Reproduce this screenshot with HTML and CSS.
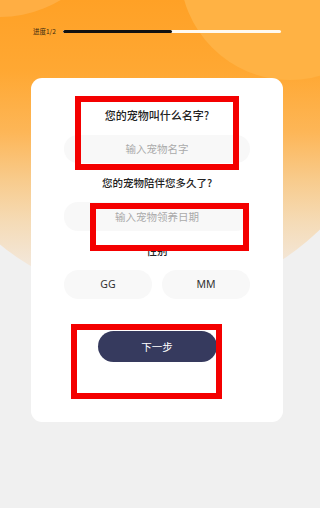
FILE: index.html
```html
<!DOCTYPE html>
<html lang="zh-CN">
<head>
<meta charset="utf-8">
<title>宠物信息</title>
<link rel="stylesheet" href="styles.css">
</head>
<body>
<div class="bg">
  <div class="bg-oval"></div>
  <div class="bg-circle-left"></div>
  <div class="bg-circle-right"></div>
</div>

<div class="page">
  <div class="progress">
    <span class="progress-label">进度1/2</span>
    <div class="progress-track"><div class="progress-fill"></div></div>
  </div>

  <div class="card">
    <div class="label label-first">您的宠物叫什么名字?</div>
    <div class="field field-first">输入宠物名字</div>
    <div class="label">您的宠物陪伴您多久了?</div>
    <div class="field field-second">输入宠物领养日期</div>
    <div class="label">性别</div>
    <div class="gender-row">
      <div class="gender">GG</div>
      <div class="gender">MM</div>
    </div>
    <div class="next">下一步</div>
  </div>
</div>

<div class="mark mark-one"></div>
<div class="mark mark-two"></div>
<div class="mark mark-three"></div>
</body>
</html>
```

FILE: styles.css
```css
html, body {
  margin: 0;
  padding: 0;
  background: #f0f0f0;
}

body {
  position: relative;
  min-width: 303px;
  height: 508px;
  overflow: hidden;
  font-family: "Noto Sans CJK SC", "Noto Sans", sans-serif;
  color: #222;
}

.bg {
  position: absolute;
  left: 0;
  top: 0;
  width: 100%;
  height: 508px;
  overflow: hidden;
}

.bg-oval {
  position: absolute;
  left: -110px;
  top: -300px;
  width: 523px;
  height: 600px;
  border-radius: 50%;
  background: linear-gradient(180deg,
    #ffa126 0%,
    #ffa126 50%,
    #ffa833 62%,
    #fdb657 72%,
    #f8cb8c 80%,
    #f5dbb6 87%,
    #f3e7d9 94%,
    #f1ede8 100%);
}

.bg-circle-left {
  position: absolute;
  left: -117px;
  top: -217px;
  width: 234px;
  height: 234px;
  border-radius: 50%;
  background: #ffae43;
}

.bg-circle-right {
  position: absolute;
  left: 180px;
  top: -140px;
  width: 220px;
  height: 220px;
  border-radius: 50%;
  background: #ffb244;
}

.page {
  position: relative;
  padding-top: 29px;
}

.progress {
  display: flex;
  align-items: center;
  margin-left: 33px;
  width: 248px;
  height: 5px;
}

.progress-label {
  font-size: 6.5px;
  line-height: 5px;
  color: #3a2a10;
  white-space: nowrap;
  width: 30px;
}

.progress-track {
  flex: 1;
  height: 3px;
  border-radius: 2px;
  background: #fffaf0;
  overflow: hidden;
}

.progress-fill {
  width: 50%;
  height: 100%;
  background: #111;
  border-radius: 2px;
}

.card {
  margin-top: 44px;
  margin-left: 31px;
  width: 252px;
  box-sizing: border-box;
  padding: 0 33px 60px;
  background: #fff;
  border-radius: 11px;
  display: flex;
  flex-direction: column;
  align-items: stretch;
}

.label {
  margin-top: 12px;
  height: 16px;
  line-height: 16px;
  text-align: center;
  font-size: 10.5px;
  font-weight: 500;
  color: #222;
}

.label-first {
  margin-top: 29px;
  font-size: 11px;
}

.field {
  height: 28px;
  line-height: 28px;
  border-radius: 14px;
  background: #f8f8f8;
  text-align: center;
  font-size: 10.5px;
  color: #aaa;
}

.field-first {
  margin-top: 12px;
}

.field-second {
  margin-top: 11px;
  height: 29px;
  line-height: 29px;
}

.gender-row {
  margin-top: 11px;
  display: flex;
  gap: 10px;
}

.gender {
  flex: 1;
  height: 29px;
  line-height: 29px;
  border-radius: 15px;
  background: #f8f8f8;
  text-align: center;
  font-family: "Noto Sans", sans-serif;
  font-size: 10.5px;
  color: #333;
}

.next {
  margin: 32px auto 0;
  width: 119px;
  height: 31px;
  line-height: 31px;
  border-radius: 16px;
  background: #363a5e;
  color: #fff;
  text-align: center;
  font-size: 10.5px;
}

.mark {
  position: absolute;
  box-sizing: border-box;
  border: 6px solid #f40000;
}

.mark-one {
  left: 75px;
  top: 96px;
  width: 164px;
  height: 74px;
}

.mark-two {
  left: 90px;
  top: 203px;
  width: 159px;
  height: 48px;
}

.mark-three {
  left: 71px;
  top: 324px;
  width: 151px;
  height: 75px;
}
```
